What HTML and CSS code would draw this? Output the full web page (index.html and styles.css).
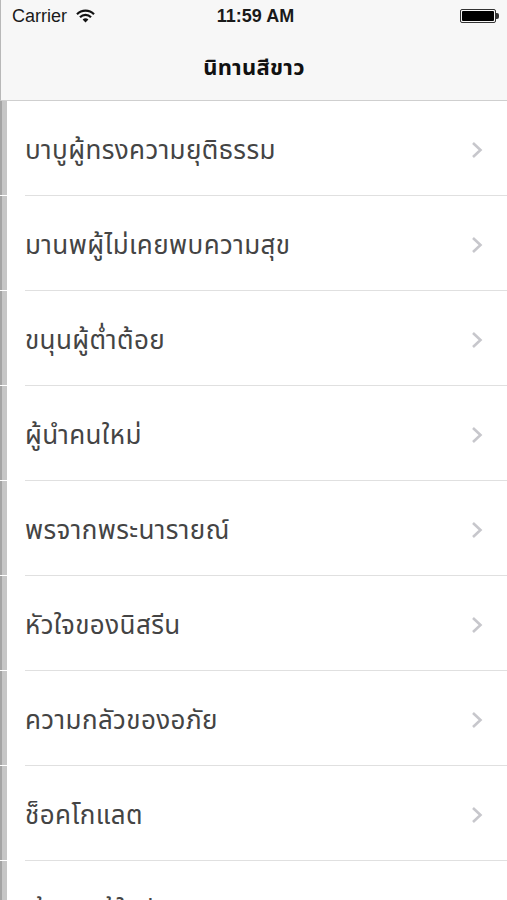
FILE: index.html
```html
<!DOCTYPE html>
<html lang="th">
<head>
<meta charset="utf-8">
<title>นิทานสีขาว</title>
<link rel="stylesheet" href="styles.css">
</head>
<body>
<div class="screen">
  <header class="topbar">
    <div class="status">
      <div class="status-left">
        <span class="carrier">Carrier</span>
        <svg class="wifi" width="19" height="14" viewBox="0 0 19 14">
          <path d="M1 5.2 A12 12 0 0 1 18 5.2" fill="none" stroke="#111" stroke-width="2.2"/>
          <path d="M4 8.2 A7.6 7.6 0 0 1 15 8.2" fill="none" stroke="#111" stroke-width="2.2"/>
          <path d="M9.5 13.5 L6.6 10.6 A4.2 4.2 0 0 1 12.4 10.6 Z" fill="#111"/>
        </svg>
      </div>
      <div class="time">11:59 AM</div>
      <div class="status-right">
        <span class="battery"><span class="battery-fill"></span></span><span class="nub"></span>
      </div>
    </div>
    <div class="navbar">
      <h1 class="title">นิทานสีขาว</h1>
    </div>
  </header>
  <ul class="list">
    <li class="row"><div class="cell"><span class="label">บาบูผู้ทรงความยุติธรรม</span><svg class="chev" width="12" height="18" viewBox="0 0 12 18"><path d="M2 2 L9.5 9 L2 16" fill="none" stroke="#c7c7cc" stroke-width="2.6"/></svg></div></li>
    <li class="row"><div class="cell"><span class="label">มานพผู้ไม่เคยพบความสุข</span><svg class="chev" width="12" height="18" viewBox="0 0 12 18"><path d="M2 2 L9.5 9 L2 16" fill="none" stroke="#c7c7cc" stroke-width="2.6"/></svg></div></li>
    <li class="row"><div class="cell"><span class="label">ขนุนผู้ต่ำต้อย</span><svg class="chev" width="12" height="18" viewBox="0 0 12 18"><path d="M2 2 L9.5 9 L2 16" fill="none" stroke="#c7c7cc" stroke-width="2.6"/></svg></div></li>
    <li class="row"><div class="cell"><span class="label">ผู้นำคนใหม่</span><svg class="chev" width="12" height="18" viewBox="0 0 12 18"><path d="M2 2 L9.5 9 L2 16" fill="none" stroke="#c7c7cc" stroke-width="2.6"/></svg></div></li>
    <li class="row"><div class="cell"><span class="label">พรจากพระนารายณ์</span><svg class="chev" width="12" height="18" viewBox="0 0 12 18"><path d="M2 2 L9.5 9 L2 16" fill="none" stroke="#c7c7cc" stroke-width="2.6"/></svg></div></li>
    <li class="row"><div class="cell"><span class="label">หัวใจของนิสรีน</span><svg class="chev" width="12" height="18" viewBox="0 0 12 18"><path d="M2 2 L9.5 9 L2 16" fill="none" stroke="#c7c7cc" stroke-width="2.6"/></svg></div></li>
    <li class="row"><div class="cell"><span class="label">ความกลัวของอภัย</span><svg class="chev" width="12" height="18" viewBox="0 0 12 18"><path d="M2 2 L9.5 9 L2 16" fill="none" stroke="#c7c7cc" stroke-width="2.6"/></svg></div></li>
    <li class="row"><div class="cell"><span class="label">ช็อคโกแลต</span><svg class="chev" width="12" height="18" viewBox="0 0 12 18"><path d="M2 2 L9.5 9 L2 16" fill="none" stroke="#c7c7cc" stroke-width="2.6"/></svg></div></li>
    <li class="row"><div class="cell"><span class="label">เจ้าชายผู้ใจดี</span><svg class="chev" width="12" height="18" viewBox="0 0 12 18"><path d="M2 2 L9.5 9 L2 16" fill="none" stroke="#c7c7cc" stroke-width="2.6"/></svg></div></li>
  </ul>
</div>
</body>
</html>
```
FILE: styles.css
```css
* { box-sizing: border-box; }
html, body { margin: 0; padding: 0; background: #fff; }
body {
  width: 507px;
  height: 900px;
  overflow: hidden;
  font-family: "Noto Sans Thai", "Noto Sans", "Liberation Sans", sans-serif;
}
.screen { width: 507px; }

.topbar {
  background: #f7f7f7;
  border-left: 1px solid #b8b8b8;
  border-bottom: 1px solid #cfcfcf;
  height: 101px;
}
.status {
  height: 32px;
  display: flex;
  align-items: center;
  justify-content: space-between;
  padding: 0 8px 0 11px;
  font-family: "Liberation Sans", Arial, sans-serif;
  color: #1a1a1a;
}
.status-left { display: flex; align-items: center; gap: 9px; width: 120px; }
.carrier { font-size: 18px; }
.wifi { display: block; margin-top: -1px; }
.time { font-size: 18px; font-weight: bold; }
.status-right { width: 120px; display: flex; justify-content: flex-end; align-items: center; }
.battery {
  width: 36px; height: 14px;
  border: 1px solid #333;
  border-radius: 2px;
  padding: 1px;
  display: flex;
}
.battery-fill { flex: 1; background: #000; border-radius: 1px; }
.nub { width: 3px; height: 6px; background: #333; border-radius: 0 2px 2px 0; }

.navbar {
  height: 68px;
  display: flex;
  align-items: center;
  justify-content: center;
}
.title {
  margin: 5px 0 0;
  font-size: 22px;
  letter-spacing: 0.3px;
  font-weight: bold;
  color: #111;
}

.list { list-style: none; margin: 0; padding: 0; }
.row {
  height: 95px;
  background:
    linear-gradient(to bottom, transparent 94px, #fff 94px),
    linear-gradient(to right, #a4a4a4 0 2px, #c6c6c6 2px 7px, #fff 7px);
}
.cell {
  margin-left: 25px;
  height: 95px;
  border-bottom: 1px solid #e0e0e0;
  display: flex;
  align-items: center;
  justify-content: space-between;
  padding: 6px 24px 0 0;
}
.label {
  font-size: 26px;
  letter-spacing: 0.4px;
  color: #444;
}
.chev { display: block; flex: none; margin-top: -2px; }
```
